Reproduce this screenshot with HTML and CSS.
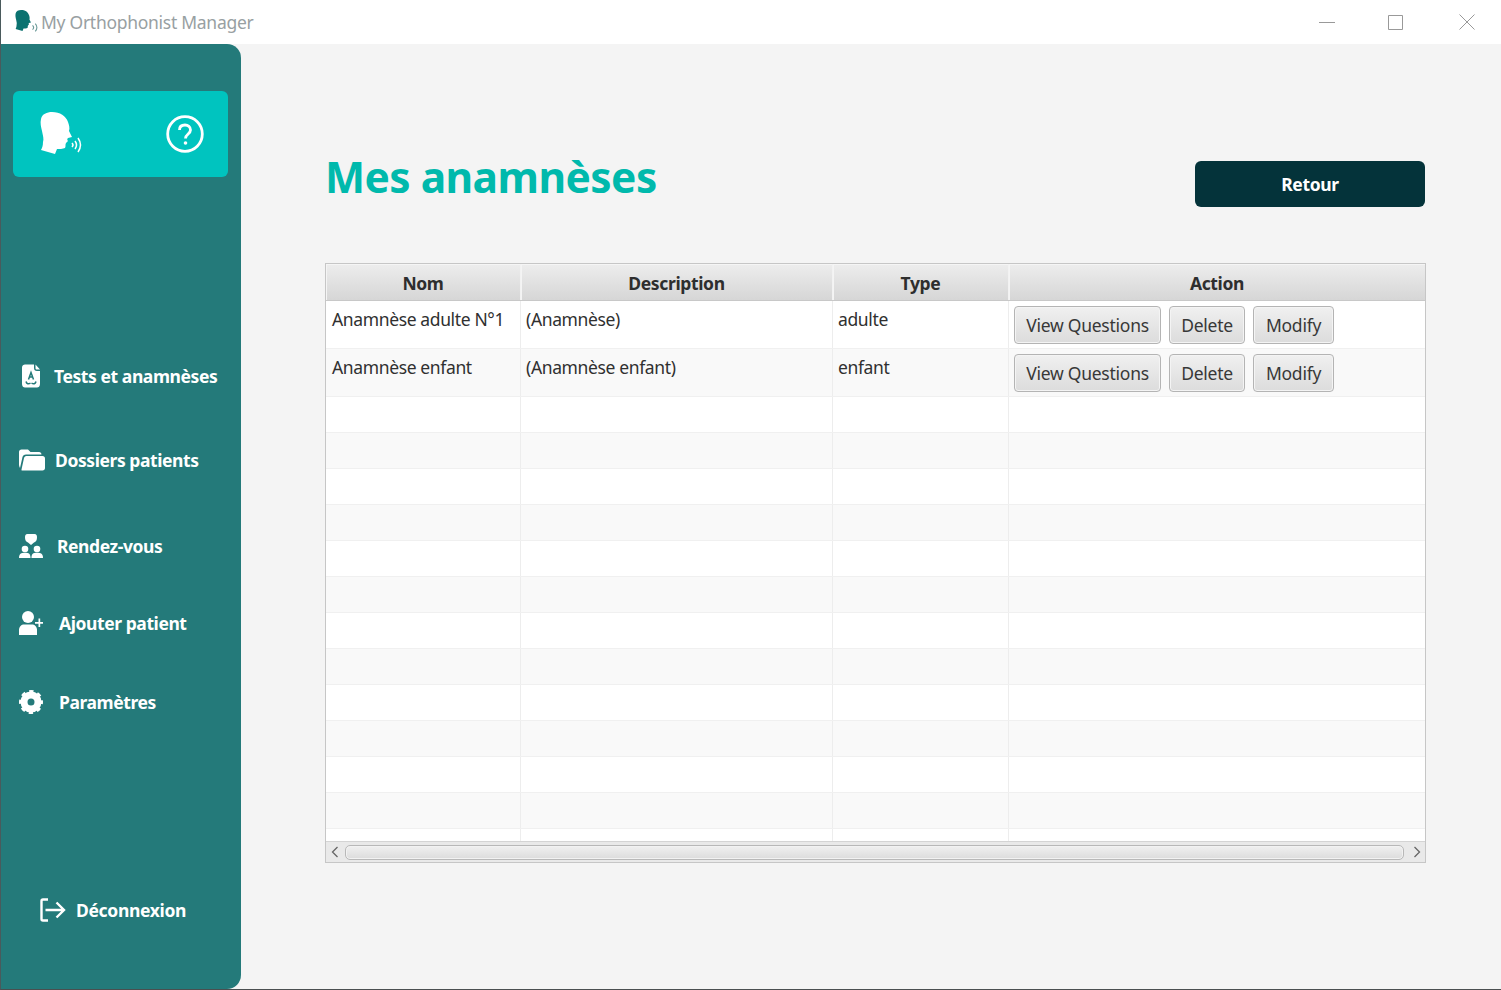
FILE: index.html
```html
<!DOCTYPE html>
<html lang="fr">
<head>
<meta charset="utf-8">
<title>My Orthophonist Manager</title>
<link rel="stylesheet" href="styles.css">
</head>
<body>
<svg class="defs" width="0" height="0" aria-hidden="true">
  <symbol id="head" viewBox="0 0 33 44">
    <path d="M12 0 C7 0 2 2 1 7 C0 11 1 15 2 19 C3 24 4 27 3 30 C3 34 2 36 1 38 L15 42 L17 37 C19 37 23 37 25 36 C26 34 25 33 26 31 L28 29 C27 28 27 27 28 26 L32 25 L29 19 C30 16 29 13 28 10 C26 4 20 0 12 0 Z"/>
  </symbol>
</svg>
<div class="window">
  <header class="titlebar">
    <svg class="app-icon" viewBox="0 0 22 22"><use href="#head" width="15" height="20" x="1" y="1"/><path class="app-wave" d="M17 15 q2 2 0 4 M19.500 13.500 q3 3.500 0 7"/></svg>
    <span class="app-name">My Orthophonist Manager</span>
    <div class="win-controls">
      <svg class="win-btn" viewBox="0 0 16 16"><path d="M0 8.500H16"/></svg>
      <svg class="win-btn win-max" viewBox="0 0 16 16"><path d="M1.500 1.500H15.500V15.500H1.500Z"/></svg>
      <svg class="win-btn win-close" viewBox="0 0 16 16"><path d="M.5 .5L15.500 15.500M15.500 .5L.5 15.500"/></svg>
    </div>
  </header>
  <div class="body">
    <aside class="sidebar">
      <div class="brand">
        <svg class="brand-head" viewBox="0 0 44 44">
          <use href="#head" width="33" height="44"/>
          <path class="brand-wave" d="M32 31 q2 2 0 4 M35 29 q3 4 0 8 M38 26 q5 7 0 14"/>
        </svg>
        <svg class="brand-help" viewBox="0 0 38 38">
          <circle cx="19" cy="19" r="17.300"/>
          <path d="M13.500 15 C13.500 11.500 16 10 19 10 C22 10 24.500 12 24.500 15 C24.500 19 19.500 19 19.500 23.500"/>
          <circle class="dot" cx="19.500" cy="28" r="1.800"/>
        </svg>
      </div>
      <nav class="nav">
        <a class="nav-item tests">
          <svg class="nav-icon" viewBox="0 0 24 24">
            <path d="M6 0.500H15V4C15 6 16 7 18 7H21V20C21 22.500 19.500 23.500 18 23.500H6C4.500 23.500 3 22.500 3 20V3.500C3 1.500 4.500 0.500 6 0.500ZM16.500 0.500L21 5.500H18C17 5.500 16.500 5 16.500 4Z"/>
            <path class="icon-cut" d="M9.500 15.500L12 8.500L14.500 15.500M10.300 13H13.700M7 17.500C7.500 20 9.500 20.500 11.500 19M17 17.500C16.500 20 14.500 20.500 12.500 19"/>
          </svg>
          <span>Tests et anamnèses</span>
        </a>
        <a class="nav-item folders">
          <svg class="nav-icon folder" viewBox="0 0 26 22"><path d="M1 19C0.500 18 0 17 0 16V3C0 1.500 1 0.500 2.500 0.500H9L11.500 3H20C21.500 3 22.500 4 22.500 5.500H7C5 5.500 4 6.500 3.500 8Z"/><path d="M5 9C5.500 7.500 6.500 7 8 7H23.500C25 7 26 8 26 9.500V19C26 20.500 25 21.500 23.500 21.500H3C2.500 21.500 2.500 21 2.500 20.500Z"/></svg>
          <span>Dossiers patients</span>
        </a>
        <a class="nav-item rdv">
          <svg class="nav-icon" viewBox="0 0 24 24"><path d="M8.500 0H15.500C17.500 0 18 1.500 18 3.500C18 6 17 8 15 8.500L12 11L9 8.500C7 8 6 6 6 3.500C6 1.500 6.500 0 8.500 0Z"/><circle cx="6" cy="15" r="3.300"/><circle cx="18" cy="15" r="3.300"/><path d="M0 24C0 20 2 18.800 6 18.800C10 18.800 11.500 20 11.500 24ZM12.500 24C12.500 20 14 18.800 18 18.800C22 18.800 24 20 24 24Z"/></svg>
          <span>Rendez-vous</span>
        </a>
        <a class="nav-item add">
          <svg class="nav-icon" viewBox="0 0 24 24"><circle cx="9" cy="6" r="6"/><path d="M0 24V19C0 15.500 2.500 13.500 5 13.500H13C15.500 13.500 18 15.500 18 19V24Z"/><path d="M16 11H19.500V7.500H21.200V11H24V12.700H21.200V16H19.500V12.700H16Z"/></svg>
          <span>Ajouter patient</span>
        </a>
        <a class="nav-item params">
          <svg class="nav-icon gear" viewBox="0 0 24 24"><circle class="gear-ring" cx="12" cy="12" r="7"/><circle class="gear-teeth" cx="12" cy="12" r="10.500"/></svg>
          <span>Paramètres</span>
        </a>
      </nav>
      <a class="logout">
        <svg class="logout-icon" viewBox="0 0 26 24"><path d="M8 1.500H3C2 1.500 1.500 2 1.500 3V21C1.500 22 2 22.500 3 22.500H8M5.500 12H24M16.500 4.500L24 12L16.500 19.500"/></svg>
        <span>Déconnexion</span>
      </a>
    </aside>
    <main class="main">
      <div class="page-head">
        <h1 class="page-title">Mes anamnèses</h1>
        <button class="back-btn">Retour</button>
      </div>
      <section class="table-frame">
        <div class="table-head">
          <div class="th col-nom">Nom</div>
          <div class="th col-desc">Description</div>
          <div class="th col-type">Type</div>
          <div class="th col-action">Action</div>
        </div>
        <div class="table-rows">
          <div class="tr tall">
            <div class="td col-nom">Anamnèse adulte N°1</div>
            <div class="td col-desc">(Anamnèse)</div>
            <div class="td col-type">adulte</div>
            <div class="td col-action actions"><button class="cell-btn btn-view">View Questions</button><button class="cell-btn btn-del">Delete</button><button class="cell-btn btn-mod">Modify</button></div>
          </div>
          <div class="tr tall odd">
            <div class="td col-nom">Anamnèse enfant</div>
            <div class="td col-desc">(Anamnèse enfant)</div>
            <div class="td col-type">enfant</div>
            <div class="td col-action actions"><button class="cell-btn btn-view">View Questions</button><button class="cell-btn btn-del">Delete</button><button class="cell-btn btn-mod">Modify</button></div>
          </div>
          <div class="tr"><div class="td col-nom"></div><div class="td col-desc"></div><div class="td col-type"></div><div class="td col-action"></div></div>
          <div class="tr odd"><div class="td col-nom"></div><div class="td col-desc"></div><div class="td col-type"></div><div class="td col-action"></div></div>
          <div class="tr"><div class="td col-nom"></div><div class="td col-desc"></div><div class="td col-type"></div><div class="td col-action"></div></div>
          <div class="tr odd"><div class="td col-nom"></div><div class="td col-desc"></div><div class="td col-type"></div><div class="td col-action"></div></div>
          <div class="tr"><div class="td col-nom"></div><div class="td col-desc"></div><div class="td col-type"></div><div class="td col-action"></div></div>
          <div class="tr odd"><div class="td col-nom"></div><div class="td col-desc"></div><div class="td col-type"></div><div class="td col-action"></div></div>
          <div class="tr"><div class="td col-nom"></div><div class="td col-desc"></div><div class="td col-type"></div><div class="td col-action"></div></div>
          <div class="tr odd"><div class="td col-nom"></div><div class="td col-desc"></div><div class="td col-type"></div><div class="td col-action"></div></div>
          <div class="tr"><div class="td col-nom"></div><div class="td col-desc"></div><div class="td col-type"></div><div class="td col-action"></div></div>
          <div class="tr odd"><div class="td col-nom"></div><div class="td col-desc"></div><div class="td col-type"></div><div class="td col-action"></div></div>
          <div class="tr"><div class="td col-nom"></div><div class="td col-desc"></div><div class="td col-type"></div><div class="td col-action"></div></div>
          <div class="tr odd"><div class="td col-nom"></div><div class="td col-desc"></div><div class="td col-type"></div><div class="td col-action"></div></div>
          <div class="tr"><div class="td col-nom"></div><div class="td col-desc"></div><div class="td col-type"></div><div class="td col-action"></div></div>
        </div>
        <div class="hscroll">
          <svg class="arrow" viewBox="0 0 8 12"><path d="M6.500 1L1.500 6L6.500 11"/></svg>
          <div class="thumb"></div>
          <svg class="arrow arrow-right" viewBox="0 0 8 12"><path d="M1.500 1L6.500 6L1.500 11"/></svg>
        </div>
      </section>
    </main>
  </div>
</div>
</body>
</html>
```
FILE: styles.css
```css
* { box-sizing: border-box; }
html, body { margin: 0; height: 100%; }
body { font-family: "Noto Sans", "Open Sans", "Liberation Sans", sans-serif; overflow: hidden; background: #fff; }
.defs { position: absolute; }
.window { width: 1501px; height: 990px; display: flex; flex-direction: column; border-left: 1px solid #4a5a5c; border-bottom: 1px solid #4a4f50; background: #f4f4f4; }

.titlebar { height: 44px; flex: none; background: #fff; display: flex; align-items: center; padding-left: 13px; }
.app-icon { width: 24px; height: 24px; fill: #0b7270; margin-right: 3px; margin-top: -3px; }
.app-wave { fill: none; stroke: #6b9a98; stroke-width: 1; }
.app-name { font-size: 17.500px; color: #98a0a2; letter-spacing: -0.280px; margin-top: -1px; }
.win-controls { margin-left: auto; display: flex; gap: 53px; padding-right: 26px; margin-top: -1px; }
.win-btn { width: 16px; height: 16px; fill: none; stroke: #999; stroke-width: 1; }
.win-max { margin-left: -1px; }
.win-close { margin-left: 3px; }

.body { flex: 1; display: flex; min-height: 0; }
.sidebar { width: 240px; flex: none; background: #247a7a; border-radius: 0 14px 14px 0; padding: 47px 13px 0 12px; display: flex; flex-direction: column; color: #fff; }
.brand { height: 86px; background: #00c4bf; border-radius: 6px; flex: none; display: flex; align-items: flex-start; padding: 21px 24px 0 27px; justify-content: space-between; }
.brand-head { width: 44px; height: 44px; fill: #fff; }
.brand-wave { fill: none; stroke: #fff; stroke-width: 1.500; }
.brand-help { width: 38px; height: 38px; margin-top: 3px; fill: none; stroke: #fff; stroke-width: 2.800; }
.brand-help .dot { fill: #fff; stroke: none; }

.nav { margin: 187px 0 0 6px; display: flex; flex-direction: column; flex: none; }
.nav-item { display: flex; align-items: center; font-weight: 700; font-size: 17.500px; letter-spacing: -0.420px; height: 24px; white-space: nowrap; }
.nav-icon { width: 24px; height: 24px; fill: #fff; flex: none; margin-right: 11px; }
.icon-cut { fill: none; stroke: #247a7a; stroke-width: 1.500; }
.folder { height: 22px; width: 26px; }
.gear-ring { fill: none; stroke: #fff; stroke-width: 7; }
.gear-teeth { fill: none; stroke: #fff; stroke-width: 3; stroke-dasharray: 4.250 4; stroke-dashoffset: 2.125; }
.folders { margin-top: 60px; }
.rdv { margin-top: 62px; }
.add { margin-top: 53px; }
.params { margin-top: 55px; }
.folders .nav-icon { margin-right: 10px; }
.rdv .nav-icon { margin-right: 14px; }
.add .nav-icon { margin-right: 16px; }
.params .nav-icon { margin-right: 16px; }

.logout { display: flex; align-items: center; margin: 184px 0 0 27px; font-weight: 700; font-size: 17.500px; letter-spacing: -0.330px; }
.logout-icon { width: 26px; height: 24px; fill: none; stroke: #fff; stroke-width: 2.400; margin-right: 10px; flex: none; }

.main { flex: 1; padding: 107px 76px 0 84px; min-width: 0; }
.page-head { display: flex; justify-content: space-between; align-items: center; height: 66px; }
.page-title { margin: -14px 0 0 0; font-size: 42.500px; line-height: 60px; font-weight: 700; color: #00b9ac; letter-spacing: -0.550px; }
.back-btn { width: 230px; height: 46px; border: 0; border-radius: 6px; background: #04333a; color: #fff; font: 700 17.500px "Noto Sans", sans-serif; letter-spacing: -0.350px; }

.table-frame { margin-top: 46px; width: 1101px; height: 600px; border: 1px solid #c6c6c6; display: flex; flex-direction: column; background: #fff; }
.table-head { height: 37px; flex: none; display: flex; background: linear-gradient(#ededed, #d6d6d6); border-bottom: 1px solid #c8c8c8; }
.th { font-weight: 700; font-size: 17.500px; letter-spacing: -0.350px; color: #2e2e2e; text-align: center; line-height: 36px; border-right: 1px solid #f2f2f2; border-top: 1px solid #f5f5f5; box-shadow: inset 1px 0 0 #f4f4f4; }
.col-nom { width: 195px; flex: none; }
.col-desc { width: 312px; flex: none; }
.col-type { width: 176px; flex: none; }
.col-action { flex: 1; min-width: 0; border-right: 0; }

.table-rows { flex: 1; min-height: 0; overflow: hidden; }
.tr { display: flex; height: 36px; background: #fff; border-bottom: 1px solid #f0f0f0; }
.tr.odd { background: #f9f9f9; }
.tr.tall { height: 48px; }
.td { height: 100%; border-right: 1px solid #ededed; padding: 6px 5px 0 5px; font-size: 17.500px; letter-spacing: -0.370px; line-height: 24px; color: #303030; white-space: nowrap; }
.td.col-nom { padding-left: 6px; }
.td.col-action { border-right: 0; }
.actions { display: flex; gap: 8px; padding: 5px 0 0 5px; }
.cell-btn { height: 38px; padding: 0; border: 1px solid #b4b4b4; border-radius: 4px; background: linear-gradient(#f0f0f0, #dcdcdc); box-shadow: inset 0 0 0 1px #f4f4f4; font: 17.500px "Noto Sans", sans-serif; letter-spacing: -0.250px; color: #383838; }
.btn-view { width: 147px; }
.btn-del { width: 76px; }
.btn-mod { width: 81px; }

.hscroll { height: 21px; flex: none; display: flex; align-items: center; gap: 6px; padding: 0 4px 0 5px; background: #e9e9e9; border-top: 1px solid #d4d4d4; }
.arrow { width: 8px; height: 12px; flex: none; fill: none; stroke: #666; stroke-width: 1.300; }
.arrow-right { margin-left: 3px; }
.thumb { flex: 1; height: 15px; border: 1px solid #b8b8b8; border-radius: 5px; background: linear-gradient(#f0f0f0, #dcdcdc); box-shadow: inset 0 0 0 1px #f2f2f2; }
```
